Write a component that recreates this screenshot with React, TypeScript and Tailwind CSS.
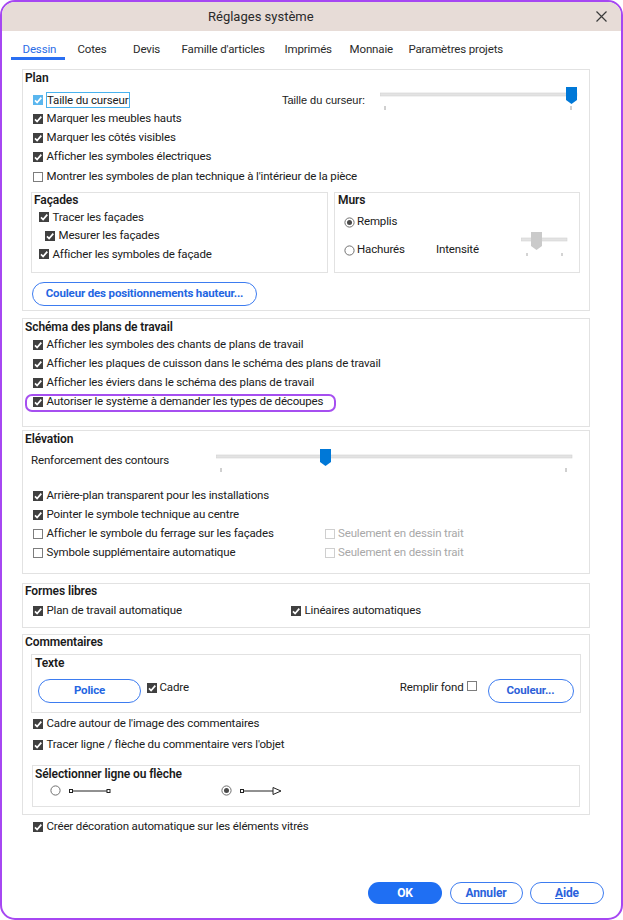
import React from "react";

function Check({ checked = true, focus = false, disabled = false }: { checked?: boolean; focus?: boolean; disabled?: boolean }) {
  if (!checked)
    return (
      <span
        className={`inline-block w-[10px] h-[10px] border ${disabled ? "border-[#cfcfcf]" : "border-[#7d7d7d]"} bg-white shrink-0`}
      />
    );
  return (
    <span className={`inline-flex w-[10px] h-[10px] ${focus ? "bg-[#5ab6ee]" : "bg-[#404040]"} shrink-0 items-center justify-center`}>
      <svg width="10" height="10" viewBox="0 0 10 10">
        <path d="M2 5.4 L4.1 7.5 L8.3 2.6" fill="none" stroke="white" strokeWidth="1.7" />
      </svg>
    </span>
  );
}

function Radio({ on = false }: { on?: boolean }) {
  return (
    <svg width="11" height="11" viewBox="0 0 11 11" className="shrink-0">
      <circle cx="5.5" cy="5.5" r="4.6" fill="white" stroke="#6f6f6f" strokeWidth="1" />
      {on && <circle cx="5.5" cy="5.5" r="2.5" fill="#4a4a4a" />}
    </svg>
  );
}

function Row({ text, checked = true, focus = false, className = "" }: { text: string; checked?: boolean; focus?: boolean; className?: string }) {
  return (
    <div className={`flex items-center h-[19px] ${className}`}>
      <Check checked={checked} focus={focus} />
      {focus ? (
        <span className="ml-[3px] border border-[#49b2ee] pr-[1px] leading-[14px]">{text}</span>
      ) : (
        <span className="ml-[3.5px] whitespace-nowrap">{text}</span>
      )}
    </div>
  );
}

function Thumb({ x, y, color }: { x: number; y: number; color: string }) {
  return <polygon points={`${x},${y} ${x + 11},${y} ${x + 11},${y + 13} ${x + 5.5},${y + 17} ${x},${y + 13}`} fill={color} />;
}

function Title({ text, h = "h-[16px] leading-[16px]", pl = "pl-[2px]" }: { text: string; h?: string; pl?: string }) {
  return <div className={`${h} ${pl} font-semibold text-[#1a1a1a] text-[12px] tracking-[-0.1px]`}>{text}</div>;
}

function Group({ title, className = "", children }: { title: string; className?: string; children?: React.ReactNode }) {
  return (
    <div className={`border border-[#e2e2e2] flex flex-col ${className}`}>
      <Title text={title} />
      {children}
    </div>
  );
}

export default function App() {
  return (
    <div className="w-[623px] h-[920px] bg-white border-2 border-[#a647f2] rounded-[15px] overflow-hidden flex flex-col font-['Roboto','Liberation_Sans',sans-serif] text-[11.5px] tracking-[-0.15px] text-[#202020]">
      {/* title bar */}
      <div className="h-[29px] shrink-0 bg-[#e7dcd7] flex items-center">
        <div className="pl-[206px] text-[13px] tracking-[0px] text-[#2a2a2a] flex-1">Réglages système</div>
        <svg width="11" height="11" viewBox="0 0 11 11" className="mr-[14px]">
          <path d="M0.5 0.5 L10.5 10.5 M10.5 0.5 L0.5 10.5" stroke="#3a3a3a" strokeWidth="1.2" />
        </svg>
      </div>

      {/* tabs */}
      <div className="h-[29px] shrink-0 flex pl-[9px]">
        {[
          ["Dessin", "w-[55px]"],
          ["Cotes", "w-[55.5px]"],
          ["Devis", "w-[48.6px]"],
          ["Famille d'articles", "w-[103px]"],
          ["Imprimés", "w-[65px]"],
          ["Monnaie", "w-[58.8px]"],
          ["Paramètres projets", "w-[120px]"],
        ].map(([t, w], i) => (
          <div key={t} className={`${w} flex flex-col`}>
            <div className={`h-[26px] pt-[10px] pl-[11.5px] leading-[16px] whitespace-nowrap ${i === 0 ? "text-[#2b6de6]" : "text-[#2a2a2a]"}`}>{t}</div>
            {i === 0 && <div className="h-[3px] bg-[#2a6ff2] w-[54px]" />}
          </div>
        ))}
      </div>

      {/* content */}
      <div className="flex flex-col flex-1 pl-[20px]">
        {/* Plan */}
        <Group title="Plan" className="mt-[9px] w-[568px] h-[242px]">
          <div className="pl-[10px] mt-[4.5px] flex flex-col">
            <div className="flex items-center h-[19px]">
              <div className="w-[249px]">
                <Row text="Taille du curseur" focus />
              </div>
              <div className="w-[98px] whitespace-nowrap font-['Liberation_Sans',sans-serif] text-[11px] tracking-[0px]">Taille du curseur:</div>
              <svg width="200" height="26" viewBox="0 0 200 26" className="shrink-0">
                <rect x="0" y="6" width="197" height="3" fill="#e3e3e3" stroke="#d2d2d2" strokeWidth="0.6" />
                <line x1="5" y1="19" x2="5" y2="23" stroke="#a0a0a0" />
                <line x1="191" y1="19" x2="191" y2="23" stroke="#a0a0a0" />
                <Thumb x={186} y={0} color="#0078d7" />
              </svg>
            </div>
            <Row text="Marquer les meubles hauts" />
            <Row text="Marquer les côtés visibles" />
            <Row text="Afficher les symboles électriques" />
            <Row text="Montrer les symboles de plan technique à l'intérieur de la pièce" checked={false} className="mt-[1px]" />
          </div>

          <div className="flex mt-[5.5px] ml-[8px] gap-[6px]">
            <div className="w-[297px] h-[81px] border border-[#e2e2e2] flex flex-col">
              <Title text="Façades" h="h-[15px] leading-[15px]" />
              <div className="flex flex-col pl-[7px]">
                <div className="h-[18.5px] flex items-center"><Check /><span className="ml-[3.5px]">Tracer les façades</span></div>
                <div className="h-[18.5px] flex items-center pl-[6px]"><Check /><span className="ml-[3.5px]">Mesurer les façades</span></div>
                <div className="h-[18.5px] flex items-center"><Check /><span className="ml-[3.5px]">Afficher les symboles de façade</span></div>
              </div>
            </div>
            <div className="w-[246px] h-[81px] border border-[#e2e2e2] flex flex-col">
              <Title text="Murs" h="h-[15px] leading-[15px]" pl="pl-[3px]" />
              <div className="pl-[9px] flex flex-col">
                <div className="h-[19px] mt-[4.5px] flex items-center">
                  <Radio on />
                  <span className="ml-[2px]">Remplis</span>
                </div>
                <div className="h-[19px] mt-[9px] flex items-center">
                  <div className="w-[92px] flex items-center">
                    <Radio />
                    <span className="ml-[2px]">Hachurés</span>
                  </div>
                  <div className="w-[85px]">Intensité</div>
                  <svg width="50" height="36" viewBox="0 0 50 36" className="shrink-0">
                    <rect x="0" y="6" width="46" height="3" fill="#e3e3e3" stroke="#d2d2d2" strokeWidth="0.6" />
                    <line x1="6" y1="21" x2="6" y2="24" stroke="#a8a8a8" />
                    <line x1="41" y1="21" x2="41" y2="24" stroke="#a8a8a8" />
                    <polygon points="10,0 21,0 21,14 15.5,18 10,14" fill="#cacaca" />
                  </svg>
                </div>
              </div>
            </div>
          </div>

          <button className="mt-[9px] ml-[9px] w-[225px] h-[24px] rounded-full border border-[#3d7cf0] text-[#2466e2] font-bold text-[11.5px] flex items-center justify-center">
            Couleur des positionnements hauteur...
          </button>
        </Group>

        {/* Schéma */}
        <Group title="Schéma des plans de travail" className="mt-[7px] w-[568px] h-[109px]">
          <div className="pl-[10px] mt-[0.5px] flex flex-col">
            <Row text="Afficher les symboles des chants de plans de travail" />
            <Row text="Afficher les plaques de cuisson dans le schéma des plans de travail" />
            <Row text="Afficher les éviers dans le schéma des plans de travail" />
            <div className="relative">
              <Row text="Autoriser le système à demander les types de découpes" />
              <span className="absolute left-[-8px] top-[1.5px] w-[311px] h-[18px] border-2 border-[#a64ff0] rounded-[7px]" />
            </div>
          </div>
        </Group>

        {/* Elévation */}
        <Group title="Elévation" className="mt-[3px] w-[568px] h-[144px]">
          <div className="pl-[8px] mt-[4.5px] h-[19px] flex items-center">
            <div className="w-[185px] whitespace-nowrap">Renforcement des contours</div>
            <svg width="360" height="26" viewBox="0 0 360 26" className="shrink-0">
              <rect x="0" y="7" width="356" height="3" fill="#e3e3e3" stroke="#d2d2d2" strokeWidth="0.6" />
              <line x1="5" y1="20" x2="5" y2="24" stroke="#a0a0a0" />
              <line x1="350" y1="20" x2="350" y2="24" stroke="#a0a0a0" />
              <Thumb x={104} y={1} color="#0078d7" />
            </svg>
          </div>
          <div className="pl-[10px] mt-[16px] flex flex-col">
            <Row text="Arrière-plan transparent pour les installations" className="h-[18.7px]" />
            <Row text="Pointer le symbole technique au centre" className="h-[18.7px]" />
            <div className="flex h-[18.7px] items-center">
              <div className="w-[292px]"><Row text="Afficher le symbole du ferrage sur les façades" checked={false} className="h-[18.7px]" /></div>
              <Check checked={false} disabled />
              <span className="ml-[3px] text-[#a8a8a8]">Seulement en dessin trait</span>
            </div>
            <div className="flex h-[18.7px] items-center">
              <div className="w-[292px]"><Row text="Symbole supplémentaire automatique" checked={false} className="h-[18.7px]" /></div>
              <Check checked={false} disabled />
              <span className="ml-[3px] text-[#a8a8a8]">Seulement en dessin trait</span>
            </div>
          </div>
        </Group>

        {/* Formes libres */}
        <div className="mt-[9px] w-[568px] h-[45px] border border-[#e2e2e2] flex flex-col">
          <Title text="Formes libres" h="h-[15px] leading-[15px]" />
          <div className="pl-[10px] mt-[2.5px] flex items-center h-[19px]">
            <div className="w-[258px]"><Row text="Plan de travail automatique" /></div>
            <Row text="Linéaires automatiques" />
          </div>
        </div>

        {/* Commentaires */}
        <div className="mt-[6px] w-[568px] h-[181px] border border-[#e2e2e2] flex flex-col">
          <Title text="Commentaires" h="h-[15px] leading-[15px]" />
          <div className="mt-[4px] ml-[8px] w-[550px] h-[59px] border border-[#e2e2e2] flex flex-col">
            <Title text="Texte" pl="pl-[3px]" />
            <div className="mt-[8px] flex items-start pl-[6px] pr-[6.5px]">
              <button className="w-[103px] h-[24px] rounded-full border border-[#3d7cf0] text-[#2466e2] font-bold text-[11.5px]">Police</button>
              <div className="h-[18px] flex items-center ml-[5.5px]">
                <Check />
                <span className="ml-[3px]">Cadre</span>
              </div>
              <div className="h-[18px] flex items-center ml-auto">
                <span>Remplir fond</span>
                <span className="ml-[3px]"><Check checked={false} /></span>
              </div>
              <button className="ml-[11px] w-[86px] h-[24px] rounded-full border border-[#3d7cf0] text-[#2e5fd8] font-bold text-[11.5px]">Couleur...</button>
            </div>
          </div>
          <div className="pl-[10px] flex flex-col">
            <Row text="Cadre autour de l'image des commentaires" className="mt-[1px]" />
            <Row text="Tracer ligne / flèche du commentaire vers l'objet" className="mt-[2px]" />
          </div>
          <div className="mt-[10.5px] ml-[9px] w-[548px] h-[42px] border border-[#e2e2e2] flex flex-col">
            <Title text="Sélectionner ligne ou flèche" />
            <div className="h-[18px] flex items-center pl-[17px]">
              <div className="w-[171px] flex items-center">
                <Radio />
                <svg width="44" height="8" viewBox="0 0 44 8" className="ml-[8px]">
                  <rect x="0.5" y="2.5" width="3" height="3" fill="white" stroke="#222" strokeWidth="1" />
                  <line x1="3.5" y1="4" x2="38" y2="4" stroke="#222" strokeWidth="1" />
                  <rect x="38" y="2.5" width="3" height="3" fill="white" stroke="#222" strokeWidth="1" />
                </svg>
              </div>
              <Radio on />
              <svg width="46" height="10" viewBox="0 0 46 10" className="ml-[8px]">
                <rect x="0.5" y="3.5" width="3" height="3" fill="white" stroke="#222" strokeWidth="1" />
                <line x1="3.5" y1="5" x2="33" y2="5" stroke="#222" strokeWidth="1" />
                <polygon points="33,1.5 41,5 33,8.5" fill="white" stroke="#222" strokeWidth="1" />
              </svg>
            </div>
          </div>
        </div>

        <div className="pl-[11px] mt-[2px]">
          <Row text="Créer décoration automatique sur les éléments vitrés" />
        </div>

        {/* bottom buttons */}
        <div className="mt-auto mb-[14px] flex justify-end pr-[17px] gap-[7.5px]">
          <button className="w-[74px] h-[22px] rounded-full bg-[#1f6ff3] text-white font-bold text-[12px]">OK</button>
          <button className="w-[73px] h-[22px] rounded-full border border-[#3d7cf0] text-[#2a62dc] font-bold text-[12px]">Annuler</button>
          <button className="w-[74px] h-[22px] rounded-full border border-[#3d7cf0] text-[#2a62dc] font-bold text-[12px]">
            <span className="underline">A</span>ide
          </button>
        </div>
      </div>
    </div>
  );
}
